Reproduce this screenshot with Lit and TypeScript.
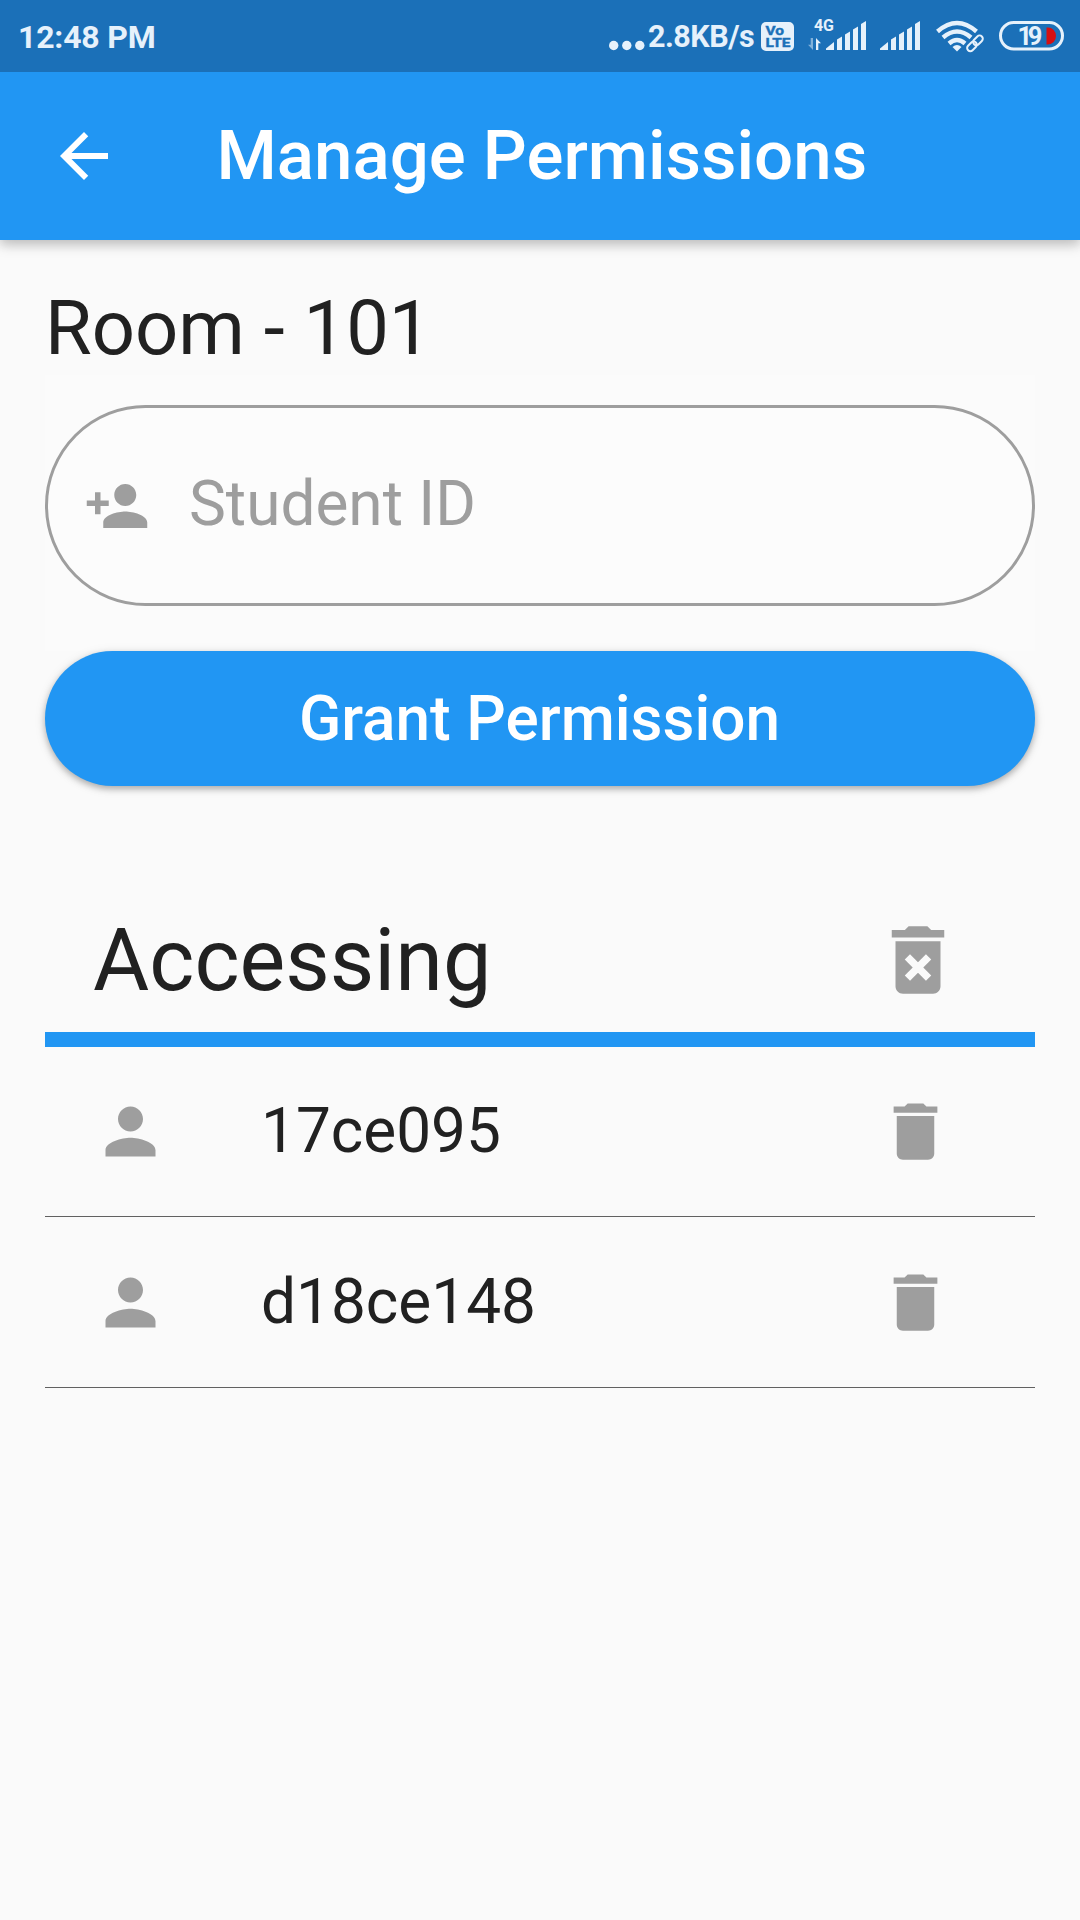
import { LitElement, html, css, svg } from "lit";
import { customElement, property, state } from "lit/decorators.js";

const ICONS: Record<string, string> = {
  back: "M20 11H7.83l5.59-5.59L12 4l-8 8 8 8 1.41-1.41L7.83 13H20v-2z",
  personAdd:
    "M15 12c2.21 0 4-1.79 4-4s-1.79-4-4-4-4 1.79-4 4 1.79 4 4 4zm-9-2V7H4v3H1v2h3v3h2v-3h3v-2H6zm9 4c-2.67 0-8 1.34-8 4v2h16v-2c0-2.66-5.33-4-8-4z",
  person:
    "M12 12c2.21 0 4-1.79 4-4s-1.79-4-4-4-4 1.79-4 4 1.79 4 4 4zm0 2c-2.67 0-8 1.34-8 4v2h16v-2c0-2.66-5.33-4-8-4z",
  remove: "M6 19c0 1.1.9 2 2 2h8c1.1 0 2-.9 2-2V7H6v12zM19 4h-3.5l-1-1h-5l-1 1H5v2h14V4z",
  removeAll:
    "M6 19c0 1.1.9 2 2 2h8c1.1 0 2-.9 2-2V7H6v12zm2.46-7.12l1.41-1.41L12 12.59l2.12-2.12 1.41 1.41L13.41 14l2.12 2.12-1.41 1.41L12 15.41l-2.12 2.12-1.41-1.41L10.59 14l-2.13-2.12zM15.5 4l-1-1h-5l-1 1H5v2h14V4z",
};

@customElement("md-icon")
class MdIcon extends LitElement {
  @property() name = "person";

  static styles = css`
    :host {
      display: block;
      flex: none;
    }
    .glyph {
      display: block;
      width: 100%;
      height: 100%;
      fill: currentColor;
    }
  `;

  render() {
    return html`<svg class="glyph" viewBox="0 0 24 24"><path d=${ICONS[this.name]}></path></svg>`;
  }
}

@customElement("status-bar")
class StatusBar extends LitElement {
  static styles = css`
    :host {
      display: flex;
      justify-content: space-between;
      height: 72px;
      flex: none;
      position: relative;
      z-index: 1;
      padding: 0 16px 0 18px;
      box-sizing: border-box;
      background: #1b70b8;
      color: #e6f1fb;
      font-family: Roboto, sans-serif;
      font-weight: 700;
    }
    .clock {
      font-size: 32px;
      line-height: 75px;
      letter-spacing: -0.2px;
      white-space: nowrap;
    }
    .tray {
      display: flex;
    }
    .rate {
      width: 108px;
      margin-left: 3px;
      margin-right: 5px;
      font-size: 30.5px;
      line-height: 74px;
      letter-spacing: -0.5px;
      white-space: nowrap;
    }
    .item {
      display: block;
      height: 72px;
      fill: currentColor;
      font-family: Roboto, sans-serif;
    }
    .gap-m {
      margin-left: 14px;
    }
    .gap-w {
      margin-left: 16px;
    }
    .gap-b {
      margin-left: 15px;
    }
    .lte {
      fill: #1b70b8;
      stroke: #1b70b8;
      stroke-width: 0.4;
      font-weight: 700;
    }
    .dim {
      opacity: 0.5;
    }
    .arc {
      fill: none;
      stroke: currentColor;
      stroke-width: 4.4;
    }
    .link {
      fill: none;
      stroke: currentColor;
      stroke-width: 2;
    }
    .shell {
      fill: none;
      stroke: currentColor;
      stroke-width: 3;
    }
    .low {
      fill: #d50f12;
    }
  `;

  private bars() {
    return svg`
      <path d="M0 50v-1.5l8-6.500V50z"></path>
      <path d="M11 50V39.500l5-3V50z"></path>
      <path d="M19 50V34.500l5-3V50z"></path>
      <path d="M27 50V29.500l5-3V50z"></path>
      <path d="M35 50V24l5-3V50z"></path>`;
  }

  render() {
    return html`
      <span class="clock">12:48 PM</span>
      <div class="tray">
        <svg class="item" width="36" viewBox="0 0 36 72">
          <circle cx="4.700" cy="45.500" r="4.700"></circle>
          <circle cx="17.800" cy="45.500" r="4.700"></circle>
          <circle cx="30.800" cy="45.500" r="4.700"></circle>
        </svg>
        <span class="rate">2.8KB/s</span>
        <svg class="item" width="33" viewBox="0 0 33 72">
          <rect y="22" width="33" height="29" rx="5"></rect>
          <text class="lte" x="4.500" y="35" font-size="12.500" textLength="18.500" lengthAdjust="spacingAndGlyphs">Vo</text>
          <text class="lte" x="4.500" y="47.300" font-size="13.500" textLength="25" lengthAdjust="spacingAndGlyphs">LTE</text>
        </svg>
        <svg class="item gap-m" width="58" viewBox="0 0 58 72">
          <text x="6" y="31" font-size="16" font-weight="700" textLength="20">4G</text>
          <path class="dim" d="M5 38v12L0 44.800h2.700V38z"></path>
          <path d="M8 50V38l5 5.200h-2.700V50z"></path>
          <g transform="translate(18 0)">${this.bars()}</g>
        </svg>
        <svg class="item gap-m" width="40" viewBox="0 0 40 72">${this.bars()}</svg>
        <svg class="item gap-w" width="48" viewBox="0 0 48 72">
          <path class="arc" d="M1.500 31.500Q21 14.500 40.500 31.500"></path>
          <path class="arc" d="M7 37.500Q21 25.500 35 37.500"></path>
          <path class="arc" d="M13 43.500Q21 36.500 29 43.500"></path>
          <path d="M16.500 47Q21 43 25.500 47L21 51.500z"></path>
          <g class="link" transform="rotate(-45 39 43)">
            <rect x="29" y="40" width="11" height="6.400" rx="3.200"></rect>
            <rect x="37.500" y="40" width="11" height="6.400" rx="3.200"></rect>
          </g>
        </svg>
        <svg class="item gap-b" width="65" viewBox="0 0 65 72">
          <rect class="shell" x="1.500" y="22.500" width="62" height="26.500" rx="13.250"></rect>
          <text x="18.500" y="44.500" font-size="25.500" font-weight="700" textLength="25">19</text>
          <path class="low" d="M47.500 27.500h1.500a8 8.500 0 0 1 0 17H47.500z"></path>
        </svg>
      </div>
    `;
  }
}

@customElement("access-row")
class AccessRow extends LitElement {
  @property() student = "";

  static styles = css`
    :host {
      display: flex;
      align-items: center;
      height: 171px;
      box-sizing: border-box;
      padding: 0 82px 0 47.5px;
      border-bottom: 1px solid #616161;
    }
    .icon {
      width: 75px;
      height: 75px;
      color: #9e9e9e;
    }
    .name {
      flex: 1;
      margin-left: 93.5px;
      font: 400 62.1px/73px Roboto, sans-serif;
      color: #212121;
      padding-bottom: 2px;
    }
  `;

  render() {
    return html`
      <md-icon class="icon" name="person"></md-icon>
      <span class="name">${this.student}</span>
      <md-icon class="icon" name="remove"></md-icon>
    `;
  }
}

@customElement("app-root")
class AppRoot extends LitElement {
  @state() private students = ["17ce095", "d18ce148"];

  static styles = css`
    :host {
      display: flex;
      flex-direction: column;
      width: 1080px;
      height: 1920px;
      overflow: hidden;
      background: #fafafa;
      font-family: Roboto, sans-serif;
      color: #212121;
    }
    .bar {
      display: flex;
      align-items: center;
      height: 168px;
      flex: none;
      padding-left: 48px;
      background: #2196f3;
      color: #fff;
      box-shadow: 0 3px 14px rgba(0, 0, 0, 0.24), 0 6px 8px rgba(0, 0, 0, 0.06);
    }
    .back {
      width: 72px;
      height: 72px;
    }
    .title {
      margin: 0 0 0 96.5px;
      font-size: 69px;
      line-height: 80px;
      font-weight: 500;
      white-space: nowrap;
    }
    .content {
      display: flex;
      flex-direction: column;
      padding: 45px 45px 0;
    }
    .room {
      margin: 0;
      height: 90px;
      font-size: 75.9px;
      line-height: 88px;
      font-weight: 400;
    }
    .field-wrap {
      background: #fbfbfb;
      padding: 30px 0 45px;
    }
    .field {
      display: flex;
      align-items: center;
      height: 201px;
      box-sizing: border-box;
      border: 3px solid #9e9e9e;
      border-radius: 100.5px;
      padding-left: 36px;
      background: #fcfcfc;
      color: #9e9e9e;
    }
    .field-icon {
      width: 66px;
      height: 66px;
    }
    .hint {
      margin-left: 39px;
      padding-bottom: 4px;
      font-size: 62.1px;
      line-height: 73px;
    }
    .grant {
      height: 135px;
      border: 0;
      border-radius: 67.5px;
      padding: 0 1px 0 0;
      background: #2196f3;
      color: #fff;
      font: 500 62.1px/73px Roboto, sans-serif;
      box-shadow: 0 3px 6px rgba(0, 0, 0, 0.26), 0 2px 12px rgba(0, 0, 0, 0.1);
    }
    .heading {
      display: flex;
      align-items: center;
      justify-content: space-between;
      height: 261px;
      box-sizing: border-box;
      padding: 102px 72px 0 48px;
      border-bottom: 15px solid #2196f3;
    }
    .heading-text {
      margin: 0;
      padding-top: 2px;
      font-size: 86.25px;
      line-height: 102px;
      font-weight: 400;
    }
    .clear {
      width: 90px;
      height: 90px;
      color: #9e9e9e;
    }
    .list {
      display: flex;
      flex-direction: column;
      margin-top: -1px;
    }
  `;

  render() {
    return html`
      <status-bar></status-bar>
      <header class="bar">
        <md-icon class="back" name="back"></md-icon>
        <h1 class="title">Manage Permissions</h1>
      </header>
      <main class="content">
        <h2 class="room">Room - 101</h2>
        <div class="field-wrap">
          <div class="field">
            <md-icon class="field-icon" name="personAdd"></md-icon>
            <span class="hint">Student ID</span>
          </div>
        </div>
        <button class="grant">Grant Permission</button>
        <div class="heading">
          <h2 class="heading-text">Accessing</h2>
          <md-icon class="clear" name="removeAll"></md-icon>
        </div>
        <div class="list">
          ${this.students.map((s) => html`<access-row .student=${s}></access-row>`)}
        </div>
      </main>
    `;
  }
}
